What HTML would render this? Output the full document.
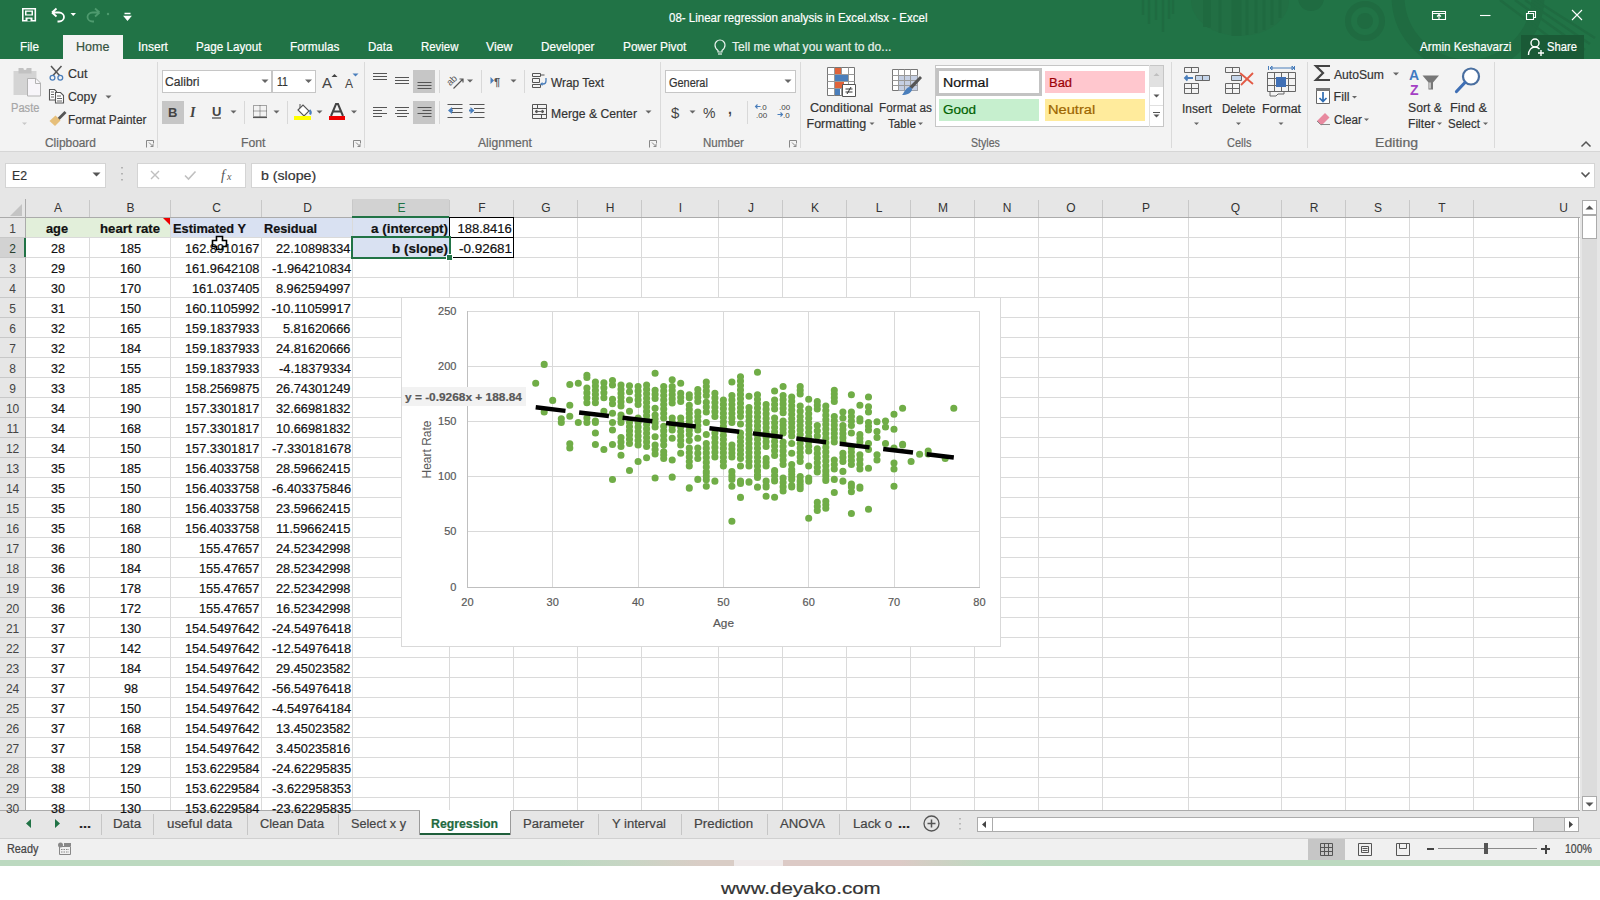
<!DOCTYPE html><html><head><meta charset="utf-8"><style>
html,body{margin:0;padding:0}body{width:1600px;height:900px;position:relative;overflow:hidden;background:#fff;font-family:'Liberation Sans',sans-serif}
.t{position:absolute;line-height:0;white-space:nowrap;-webkit-text-stroke:0.2px currentColor}
</style></head><body>
<div style="position:absolute;left:0px;top:0px;width:1600px;height:59px;background:#217346"></div>
<svg style="position:absolute;left:0;top:0" width="1600" height="59">
<g fill="none" stroke="#1f6b41" stroke-width="2.5">
<path d="M1143 0v15M1149 0v24M1156 0v20M1163 0v32M1169 0v19M1173 0v14"/>
<circle cx="1365" cy="21" r="17" stroke-width="6"/>
<circle cx="1468" cy="-4" r="70" stroke-width="13"/>
<path d="M1515 0l70 50M1525 0l65 44M1535 0l60 38M1500 0l60 45" stroke-width="2.5"/>
</g>
<path d="M1191 0a49 36 0 0 0 98 0z" fill="#226f44"/>
<g stroke="#1f6a40" stroke-width="3"><path d="M1209 0v28M1220 0v33M1233 0v36M1240 0v36M1247 0v35M1256 0v33M1264 0v30M1272 0v25M1280 0v18"/></g>
<path d="M1207 0v27" stroke="#1f6a40" stroke-width="8"/>
<path d="M1236 0v36" stroke="#1f6a40" stroke-width="8"/>
<circle cx="1365" cy="21" r="8" fill="#1f6b41"/>
<circle cx="1311" cy="-2" r="13" fill="#1f6b41"/>
</svg>
<div style="position:absolute;left:63px;top:35px;width:60px;height:24px;background:#f3f3f3"></div>
<div style="position:absolute;left:1521px;top:35px;width:63px;height:24px;background:#1a5a36"></div>
<div style="position:absolute;left:0px;top:59px;width:1600px;height:92px;background:#f3f3f3"></div>
<div style="position:absolute;left:0px;top:151px;width:1600px;height:1px;background:#d6d6d6"></div>
<div style="position:absolute;left:157px;top:62px;width:1px;height:86px;background:#dadada"></div>
<div style="position:absolute;left:364px;top:62px;width:1px;height:86px;background:#dadada"></div>
<div style="position:absolute;left:660px;top:62px;width:1px;height:86px;background:#dadada"></div>
<div style="position:absolute;left:800px;top:62px;width:1px;height:86px;background:#dadada"></div>
<div style="position:absolute;left:1171px;top:62px;width:1px;height:86px;background:#dadada"></div>
<div style="position:absolute;left:1307px;top:62px;width:1px;height:86px;background:#dadada"></div>
<div style="position:absolute;left:1494px;top:62px;width:1px;height:86px;background:#dadada"></div>
<div style="position:absolute;left:162px;top:70px;width:110px;height:23px;background:#fff;border:1px solid #c6c6c6;box-sizing:border-box"></div>
<div style="position:absolute;left:272px;top:70px;width:44px;height:23px;background:#fff;border:1px solid #c6c6c6;box-sizing:border-box"></div>
<div style="position:absolute;left:162px;top:101px;width:22px;height:23px;background:#c6c6c6"></div>
<div style="position:absolute;left:413px;top:70px;width:22px;height:23px;background:#c6c6c6"></div>
<div style="position:absolute;left:413px;top:101px;width:22px;height:23px;background:#c6c6c6"></div>
<div style="position:absolute;left:665px;top:70px;width:131px;height:23px;background:#fff;border:1px solid #c6c6c6;box-sizing:border-box"></div>
<div style="position:absolute;left:935px;top:65px;width:229px;height:62px;background:#fff;border:1px solid #c6c6c6;box-sizing:border-box"></div>
<div style="position:absolute;left:936px;top:68px;width:106px;height:28px;background:#fff;border:3px solid #c3c3c3;box-sizing:border-box"></div>
<div style="position:absolute;left:1045px;top:71px;width:100px;height:22px;background:#ffc7ce"></div>
<div style="position:absolute;left:939px;top:99px;width:100px;height:22px;background:#c6efce"></div>
<div style="position:absolute;left:1045px;top:99px;width:100px;height:22px;background:#ffeb9c"></div>
<div style="position:absolute;left:1150px;top:66px;width:13px;height:20px;background:#e1e1e1"></div>
<div style="position:absolute;left:1150px;top:86px;width:13px;height:1px;background:#e0e0e0"></div>
<div style="position:absolute;left:1150px;top:105px;width:13px;height:1px;background:#e0e0e0"></div>
<div style="position:absolute;left:1149px;top:65px;width:1px;height:62px;background:#e0e0e0"></div>
<div style="position:absolute;left:0px;top:152px;width:1600px;height:47px;background:#e6e6e6"></div>
<div style="position:absolute;left:5px;top:163px;width:101px;height:25px;background:#fff;border:1px solid #d4d4d4;box-sizing:border-box"></div>
<div style="position:absolute;left:137px;top:163px;width:109px;height:25px;background:#fff;border:1px solid #d4d4d4;box-sizing:border-box"></div>
<div style="position:absolute;left:251px;top:163px;width:1344px;height:25px;background:#fff;border:1px solid #d4d4d4;box-sizing:border-box"></div>
<div style="position:absolute;left:0px;top:199px;width:1600px;height:612px;background:#fff"></div>
<div style="position:absolute;left:0px;top:199px;width:1580px;height:19px;background:#e6e6e6"></div>
<div style="position:absolute;left:0px;top:218px;width:25px;height:593px;background:#e6e6e6"></div>
<div style="position:absolute;left:352px;top:199px;width:97px;height:18px;background:#d2d2d2"></div>
<div style="position:absolute;left:0px;top:237px;width:25px;height:20px;background:#d2d2d2"></div>
<div style="position:absolute;left:89px;top:218px;width:1px;height:593px;background:#dadada"></div>
<div style="position:absolute;left:89px;top:200px;width:1px;height:17px;background:#c8c8c8"></div>
<div style="position:absolute;left:170px;top:218px;width:1px;height:593px;background:#dadada"></div>
<div style="position:absolute;left:170px;top:200px;width:1px;height:17px;background:#c8c8c8"></div>
<div style="position:absolute;left:261px;top:218px;width:1px;height:593px;background:#dadada"></div>
<div style="position:absolute;left:261px;top:200px;width:1px;height:17px;background:#c8c8c8"></div>
<div style="position:absolute;left:352px;top:218px;width:1px;height:593px;background:#dadada"></div>
<div style="position:absolute;left:352px;top:200px;width:1px;height:17px;background:#c8c8c8"></div>
<div style="position:absolute;left:449px;top:218px;width:1px;height:593px;background:#dadada"></div>
<div style="position:absolute;left:449px;top:200px;width:1px;height:17px;background:#c8c8c8"></div>
<div style="position:absolute;left:513px;top:218px;width:1px;height:593px;background:#dadada"></div>
<div style="position:absolute;left:513px;top:200px;width:1px;height:17px;background:#c8c8c8"></div>
<div style="position:absolute;left:577px;top:218px;width:1px;height:593px;background:#dadada"></div>
<div style="position:absolute;left:577px;top:200px;width:1px;height:17px;background:#c8c8c8"></div>
<div style="position:absolute;left:641px;top:218px;width:1px;height:593px;background:#dadada"></div>
<div style="position:absolute;left:641px;top:200px;width:1px;height:17px;background:#c8c8c8"></div>
<div style="position:absolute;left:718px;top:218px;width:1px;height:593px;background:#dadada"></div>
<div style="position:absolute;left:718px;top:200px;width:1px;height:17px;background:#c8c8c8"></div>
<div style="position:absolute;left:782px;top:218px;width:1px;height:593px;background:#dadada"></div>
<div style="position:absolute;left:782px;top:200px;width:1px;height:17px;background:#c8c8c8"></div>
<div style="position:absolute;left:846px;top:218px;width:1px;height:593px;background:#dadada"></div>
<div style="position:absolute;left:846px;top:200px;width:1px;height:17px;background:#c8c8c8"></div>
<div style="position:absolute;left:910px;top:218px;width:1px;height:593px;background:#dadada"></div>
<div style="position:absolute;left:910px;top:200px;width:1px;height:17px;background:#c8c8c8"></div>
<div style="position:absolute;left:974px;top:218px;width:1px;height:593px;background:#dadada"></div>
<div style="position:absolute;left:974px;top:200px;width:1px;height:17px;background:#c8c8c8"></div>
<div style="position:absolute;left:1038px;top:218px;width:1px;height:593px;background:#dadada"></div>
<div style="position:absolute;left:1038px;top:200px;width:1px;height:17px;background:#c8c8c8"></div>
<div style="position:absolute;left:1102px;top:218px;width:1px;height:593px;background:#dadada"></div>
<div style="position:absolute;left:1102px;top:200px;width:1px;height:17px;background:#c8c8c8"></div>
<div style="position:absolute;left:1188px;top:218px;width:1px;height:593px;background:#dadada"></div>
<div style="position:absolute;left:1188px;top:200px;width:1px;height:17px;background:#c8c8c8"></div>
<div style="position:absolute;left:1281px;top:218px;width:1px;height:593px;background:#dadada"></div>
<div style="position:absolute;left:1281px;top:200px;width:1px;height:17px;background:#c8c8c8"></div>
<div style="position:absolute;left:1345px;top:218px;width:1px;height:593px;background:#dadada"></div>
<div style="position:absolute;left:1345px;top:200px;width:1px;height:17px;background:#c8c8c8"></div>
<div style="position:absolute;left:1409px;top:218px;width:1px;height:593px;background:#dadada"></div>
<div style="position:absolute;left:1409px;top:200px;width:1px;height:17px;background:#c8c8c8"></div>
<div style="position:absolute;left:1473px;top:218px;width:1px;height:593px;background:#dadada"></div>
<div style="position:absolute;left:1473px;top:200px;width:1px;height:17px;background:#c8c8c8"></div>
<div style="position:absolute;left:25px;top:237px;width:1555px;height:1px;background:#dadada"></div>
<div style="position:absolute;left:0px;top:237px;width:25px;height:1px;background:#c8c8c8"></div>
<div style="position:absolute;left:25px;top:257px;width:1555px;height:1px;background:#dadada"></div>
<div style="position:absolute;left:0px;top:257px;width:25px;height:1px;background:#c8c8c8"></div>
<div style="position:absolute;left:25px;top:277px;width:1555px;height:1px;background:#dadada"></div>
<div style="position:absolute;left:0px;top:277px;width:25px;height:1px;background:#c8c8c8"></div>
<div style="position:absolute;left:25px;top:297px;width:1555px;height:1px;background:#dadada"></div>
<div style="position:absolute;left:0px;top:297px;width:25px;height:1px;background:#c8c8c8"></div>
<div style="position:absolute;left:25px;top:317px;width:1555px;height:1px;background:#dadada"></div>
<div style="position:absolute;left:0px;top:317px;width:25px;height:1px;background:#c8c8c8"></div>
<div style="position:absolute;left:25px;top:337px;width:1555px;height:1px;background:#dadada"></div>
<div style="position:absolute;left:0px;top:337px;width:25px;height:1px;background:#c8c8c8"></div>
<div style="position:absolute;left:25px;top:357px;width:1555px;height:1px;background:#dadada"></div>
<div style="position:absolute;left:0px;top:357px;width:25px;height:1px;background:#c8c8c8"></div>
<div style="position:absolute;left:25px;top:377px;width:1555px;height:1px;background:#dadada"></div>
<div style="position:absolute;left:0px;top:377px;width:25px;height:1px;background:#c8c8c8"></div>
<div style="position:absolute;left:25px;top:397px;width:1555px;height:1px;background:#dadada"></div>
<div style="position:absolute;left:0px;top:397px;width:25px;height:1px;background:#c8c8c8"></div>
<div style="position:absolute;left:25px;top:417px;width:1555px;height:1px;background:#dadada"></div>
<div style="position:absolute;left:0px;top:417px;width:25px;height:1px;background:#c8c8c8"></div>
<div style="position:absolute;left:25px;top:437px;width:1555px;height:1px;background:#dadada"></div>
<div style="position:absolute;left:0px;top:437px;width:25px;height:1px;background:#c8c8c8"></div>
<div style="position:absolute;left:25px;top:457px;width:1555px;height:1px;background:#dadada"></div>
<div style="position:absolute;left:0px;top:457px;width:25px;height:1px;background:#c8c8c8"></div>
<div style="position:absolute;left:25px;top:477px;width:1555px;height:1px;background:#dadada"></div>
<div style="position:absolute;left:0px;top:477px;width:25px;height:1px;background:#c8c8c8"></div>
<div style="position:absolute;left:25px;top:497px;width:1555px;height:1px;background:#dadada"></div>
<div style="position:absolute;left:0px;top:497px;width:25px;height:1px;background:#c8c8c8"></div>
<div style="position:absolute;left:25px;top:517px;width:1555px;height:1px;background:#dadada"></div>
<div style="position:absolute;left:0px;top:517px;width:25px;height:1px;background:#c8c8c8"></div>
<div style="position:absolute;left:25px;top:537px;width:1555px;height:1px;background:#dadada"></div>
<div style="position:absolute;left:0px;top:537px;width:25px;height:1px;background:#c8c8c8"></div>
<div style="position:absolute;left:25px;top:557px;width:1555px;height:1px;background:#dadada"></div>
<div style="position:absolute;left:0px;top:557px;width:25px;height:1px;background:#c8c8c8"></div>
<div style="position:absolute;left:25px;top:577px;width:1555px;height:1px;background:#dadada"></div>
<div style="position:absolute;left:0px;top:577px;width:25px;height:1px;background:#c8c8c8"></div>
<div style="position:absolute;left:25px;top:597px;width:1555px;height:1px;background:#dadada"></div>
<div style="position:absolute;left:0px;top:597px;width:25px;height:1px;background:#c8c8c8"></div>
<div style="position:absolute;left:25px;top:617px;width:1555px;height:1px;background:#dadada"></div>
<div style="position:absolute;left:0px;top:617px;width:25px;height:1px;background:#c8c8c8"></div>
<div style="position:absolute;left:25px;top:637px;width:1555px;height:1px;background:#dadada"></div>
<div style="position:absolute;left:0px;top:637px;width:25px;height:1px;background:#c8c8c8"></div>
<div style="position:absolute;left:25px;top:657px;width:1555px;height:1px;background:#dadada"></div>
<div style="position:absolute;left:0px;top:657px;width:25px;height:1px;background:#c8c8c8"></div>
<div style="position:absolute;left:25px;top:677px;width:1555px;height:1px;background:#dadada"></div>
<div style="position:absolute;left:0px;top:677px;width:25px;height:1px;background:#c8c8c8"></div>
<div style="position:absolute;left:25px;top:697px;width:1555px;height:1px;background:#dadada"></div>
<div style="position:absolute;left:0px;top:697px;width:25px;height:1px;background:#c8c8c8"></div>
<div style="position:absolute;left:25px;top:717px;width:1555px;height:1px;background:#dadada"></div>
<div style="position:absolute;left:0px;top:717px;width:25px;height:1px;background:#c8c8c8"></div>
<div style="position:absolute;left:25px;top:737px;width:1555px;height:1px;background:#dadada"></div>
<div style="position:absolute;left:0px;top:737px;width:25px;height:1px;background:#c8c8c8"></div>
<div style="position:absolute;left:25px;top:757px;width:1555px;height:1px;background:#dadada"></div>
<div style="position:absolute;left:0px;top:757px;width:25px;height:1px;background:#c8c8c8"></div>
<div style="position:absolute;left:25px;top:777px;width:1555px;height:1px;background:#dadada"></div>
<div style="position:absolute;left:0px;top:777px;width:25px;height:1px;background:#c8c8c8"></div>
<div style="position:absolute;left:25px;top:797px;width:1555px;height:1px;background:#dadada"></div>
<div style="position:absolute;left:0px;top:797px;width:25px;height:1px;background:#c8c8c8"></div>
<div style="position:absolute;left:0px;top:217px;width:1580px;height:1px;background:#ababab"></div>
<div style="position:absolute;left:25px;top:199px;width:1px;height:612px;background:#ababab"></div>
<div style="position:absolute;left:1578px;top:217px;width:1px;height:594px;background:#ababab"></div>
<div style="position:absolute;left:24px;top:238px;width:2px;height:19px;background:#217346"></div>
<div style="position:absolute;left:26px;top:218px;width:144px;height:19px;background:#e2efda"></div>
<div style="position:absolute;left:171px;top:218px;width:181px;height:19px;background:#d9e1f2"></div>
<div style="position:absolute;left:353px;top:218px;width:96px;height:39px;background:#d9e1f2"></div>
<div style="position:absolute;left:449px;top:217px;width:65px;height:1px;background:#000"></div>
<div style="position:absolute;left:449px;top:237px;width:65px;height:1px;background:#000"></div>
<div style="position:absolute;left:449px;top:257px;width:65px;height:1px;background:#000"></div>
<div style="position:absolute;left:513px;top:217px;width:1px;height:41px;background:#000"></div>
<div style="position:absolute;left:449px;top:217px;width:1px;height:41px;background:#000"></div>
<div style="position:absolute;left:352px;top:216px;width:97px;height:2px;background:#217346"></div>
<div style="position:absolute;left:352px;top:236px;width:98px;height:2px;background:#217346"></div>
<div style="position:absolute;left:351px;top:236px;width:2px;height:23px;background:#217346"></div>
<div style="position:absolute;left:449px;top:236px;width:2px;height:19px;background:#217346"></div>
<div style="position:absolute;left:351px;top:257px;width:96px;height:2px;background:#217346"></div>
<div style="position:absolute;left:446px;top:254px;width:7px;height:7px;background:#217346;border:1px solid #fff;box-sizing:border-box"></div>
<svg style="position:absolute;left:163px;top:218px" width="7" height="7"><path d="M0 0H7V7Z" fill="#e00"/></svg>
<div style="position:absolute;left:401px;top:297px;width:600px;height:350px;background:#fff;border:1px solid #d9d9d9;box-sizing:border-box"></div>
<svg style="position:absolute;left:0;top:0" width="1600" height="900">
<path d="M467.4 531.9H979.5 M467.4 476.7H979.5 M467.4 421.5H979.5 M467.4 366.3H979.5 M467.4 311.1H979.5 M552.7 311.2V587 M638.1 311.2V587 M723.4 311.2V587 M808.7 311.2V587 M894.0 311.2V587 M979.4 311.2V587" stroke="#d9d9d9" stroke-width="1" fill="none" shape-rendering="crispEdges"/>
<path d="M467.5 311V587.5H979.5" stroke="#bfbfbf" stroke-width="1" fill="none" shape-rendering="crispEdges"/>
<path d="M535.7 383.2h0 M535.7 383.2h0 M544.2 364.4h0 M544.2 364.4h0 M544.2 412.0h0 M544.2 412.0h0 M552.7 400.4h0 M552.7 400.4h0 M561.3 418.7h0 M561.3 422.5h0 M569.8 384.5h0 M569.8 384.5h0 M569.8 405.2h0 M569.8 405.2h0 M569.8 416.2h0 M569.8 416.2h0 M569.8 443.8h0 M569.8 448.0h0 M578.3 383.2h0 M578.3 383.2h0 M578.3 422.5h0 M578.3 422.5h0 M586.9 375.2h0 M586.9 377.5h0 M586.9 388.0h0 M586.9 392.9h0 M586.9 397.8h0 M586.9 402.7h0 M586.9 418.0h0 M586.9 422.5h0 M595.4 382.0h0 M595.4 386.1h0 M595.4 390.3h0 M595.4 394.4h0 M595.4 398.6h0 M595.4 402.7h0 M595.4 421.0h0 M595.4 422.5h0 M595.4 433.0h0 M595.4 433.0h0 M595.4 444.5h0 M595.4 444.5h0 M603.9 382.7h0 M603.9 387.7h0 M603.9 392.7h0 M603.9 397.7h0 M603.9 411.2h0 M603.9 411.2h0 M603.9 449.5h0 M603.9 449.5h0 M612.5 380.5h0 M612.5 385.0h0 M612.5 399.2h0 M612.5 403.7h0 M612.5 413.2h0 M612.5 413.2h0 M612.5 422.5h0 M612.5 422.5h0 M612.5 430.0h0 M612.5 430.0h0 M612.5 444.5h0 M612.5 444.5h0 M612.5 479.5h0 M612.5 479.5h0 M621.0 385.0h0 M621.0 389.2h0 M621.0 393.4h0 M621.0 397.6h0 M621.0 401.8h0 M621.0 406.0h0 M621.0 415.0h0 M621.0 418.8h0 M621.0 422.5h0 M621.0 437.5h0 M621.0 442.0h0 M621.0 446.5h0 M621.0 455.2h0 M621.0 455.2h0 M629.5 385.7h0 M629.5 391.7h0 M629.5 400.0h0 M629.5 400.0h0 M629.5 411.2h0 M629.5 411.2h0 M629.5 422.5h0 M629.5 426.7h0 M629.5 430.9h0 M629.5 435.1h0 M629.5 439.3h0 M629.5 443.5h0 M629.5 470.5h0 M629.5 470.5h0 M638.1 386.5h0 M638.1 391.0h0 M638.1 395.5h0 M638.1 400.0h0 M638.1 404.5h0 M638.1 418.0h0 M638.1 422.5h0 M638.1 427.0h0 M638.1 431.5h0 M638.1 436.0h0 M638.1 440.5h0 M638.1 445.0h0 M638.1 461.5h0 M638.1 461.5h0 M646.6 385.0h0 M646.6 389.4h0 M646.6 393.8h0 M646.6 398.2h0 M646.6 402.6h0 M646.6 407.0h0 M646.6 411.4h0 M646.6 415.8h0 M646.6 420.1h0 M646.6 424.5h0 M646.6 428.9h0 M646.6 433.3h0 M646.6 437.7h0 M646.6 442.1h0 M646.6 446.5h0 M646.6 457.7h0 M646.6 457.7h0 M655.1 373.3h0 M655.1 373.3h0 M655.1 390.2h0 M655.1 394.4h0 M655.1 398.5h0 M655.1 408.2h0 M655.1 408.2h0 M655.1 415.0h0 M655.1 419.0h0 M655.1 423.0h0 M655.1 427.0h0 M655.1 436.7h0 M655.1 436.7h0 M655.1 445.0h0 M655.1 449.5h0 M655.1 454.0h0 M655.1 478.0h0 M655.1 478.0h0 M663.7 386.5h0 M663.7 391.0h0 M663.7 395.5h0 M663.7 400.0h0 M663.7 404.5h0 M663.7 409.0h0 M663.7 413.5h0 M663.7 418.0h0 M663.7 426.2h0 M663.7 430.9h0 M663.7 435.6h0 M663.7 440.3h0 M663.7 445.0h0 M663.7 451.7h0 M663.7 455.1h0 M663.7 458.5h0 M672.2 379.7h0 M672.2 379.7h0 M672.2 386.5h0 M672.2 390.6h0 M672.2 394.8h0 M672.2 398.9h0 M672.2 403.0h0 M672.2 418.0h0 M672.2 422.0h0 M672.2 426.0h0 M672.2 430.0h0 M672.2 438.2h0 M672.2 438.2h0 M672.2 460.0h0 M672.2 460.0h0 M672.2 477.2h0 M672.2 477.2h0 M680.7 383.2h0 M680.7 383.2h0 M680.7 393.2h0 M680.7 397.4h0 M680.7 401.5h0 M680.7 418.0h0 M680.7 422.5h0 M680.7 427.0h0 M680.7 431.5h0 M680.7 436.0h0 M680.7 440.5h0 M680.7 445.0h0 M680.7 453.2h0 M680.7 453.2h0 M689.3 394.7h0 M689.3 397.7h0 M689.3 405.2h0 M689.3 409.4h0 M689.3 413.6h0 M689.3 417.8h0 M689.3 421.9h0 M689.3 426.1h0 M689.3 430.3h0 M689.3 434.5h0 M689.3 440.5h0 M689.3 440.5h0 M689.3 448.0h0 M689.3 452.5h0 M689.3 457.0h0 M689.3 461.5h0 M689.3 466.0h0 M689.3 487.7h0 M689.3 487.7h0 M697.8 389.5h0 M697.8 393.5h0 M697.8 397.5h0 M697.8 401.5h0 M697.8 412.0h0 M697.8 416.5h0 M697.8 421.0h0 M697.8 425.5h0 M697.8 430.0h0 M697.8 438.2h0 M697.8 438.2h0 M697.8 448.0h0 M697.8 453.2h0 M697.8 458.5h0 M697.8 479.5h0 M697.8 479.5h0 M706.3 382.0h0 M706.3 386.5h0 M706.3 391.0h0 M706.3 395.5h0 M706.3 402.2h0 M706.3 407.1h0 M706.3 412.0h0 M706.3 422.5h0 M706.3 422.5h0 M706.3 434.5h0 M706.3 434.5h0 M706.3 443.5h0 M706.3 448.2h0 M706.3 452.9h0 M706.3 457.6h0 M706.3 462.4h0 M706.3 467.1h0 M706.3 471.8h0 M706.3 476.5h0 M706.3 486.2h0 M706.3 486.2h0 M714.9 393.2h0 M714.9 397.9h0 M714.9 402.5h0 M714.9 407.2h0 M714.9 411.8h0 M714.9 416.5h0 M714.9 433.0h0 M714.9 437.8h0 M714.9 442.6h0 M714.9 447.4h0 M714.9 452.2h0 M714.9 457.0h0 M714.9 481.0h0 M714.9 481.0h0 M723.4 400.0h0 M723.4 404.4h0 M723.4 408.8h0 M723.4 413.2h0 M723.4 417.6h0 M723.4 422.0h0 M723.4 426.4h0 M723.4 430.8h0 M723.4 435.2h0 M723.4 439.6h0 M723.4 444.0h0 M723.4 448.4h0 M723.4 452.8h0 M723.4 457.2h0 M723.4 461.6h0 M723.4 466.0h0 M731.9 382.0h0 M731.9 382.0h0 M731.9 395.5h0 M731.9 400.0h0 M731.9 404.5h0 M731.9 409.0h0 M731.9 413.5h0 M731.9 418.0h0 M731.9 422.5h0 M731.9 445.0h0 M731.9 449.0h0 M731.9 453.0h0 M731.9 457.0h0 M731.9 472.0h0 M731.9 475.8h0 M731.9 479.5h0 M740.5 376.7h0 M740.5 381.1h0 M740.5 385.5h0 M740.5 390.0h0 M740.5 394.4h0 M740.5 398.8h0 M740.5 403.2h0 M740.5 407.7h0 M740.5 412.1h0 M740.5 416.5h0 M740.5 424.0h0 M740.5 424.0h0 M740.5 433.0h0 M740.5 437.2h0 M740.5 441.5h0 M740.5 445.8h0 M740.5 450.0h0 M740.5 454.2h0 M740.5 458.5h0 M740.5 466.0h0 M740.5 466.0h0 M740.5 481.0h0 M740.5 482.5h0 M749.0 396.2h0 M749.0 396.2h0 M749.0 407.5h0 M749.0 412.0h0 M749.0 416.5h0 M749.0 421.0h0 M749.0 425.5h0 M749.0 430.0h0 M749.0 434.5h0 M749.0 439.0h0 M749.0 443.5h0 M749.0 448.0h0 M749.0 452.5h0 M749.0 457.0h0 M749.0 461.5h0 M749.0 466.0h0 M749.0 481.7h0 M749.0 481.7h0 M757.5 372.2h0 M757.5 372.2h0 M757.5 394.7h0 M757.5 399.2h0 M757.5 403.6h0 M757.5 408.1h0 M757.5 412.5h0 M757.5 417.0h0 M757.5 421.5h0 M757.5 425.9h0 M757.5 430.4h0 M757.5 434.9h0 M757.5 439.3h0 M757.5 443.8h0 M757.5 448.2h0 M757.5 452.7h0 M757.5 457.2h0 M757.5 461.6h0 M757.5 466.1h0 M757.5 470.5h0 M757.5 475.0h0 M757.5 487.0h0 M757.5 487.0h0 M766.1 404.5h0 M766.1 409.2h0 M766.1 413.8h0 M766.1 418.5h0 M766.1 423.2h0 M766.1 427.8h0 M766.1 432.5h0 M766.1 437.2h0 M766.1 441.8h0 M766.1 446.5h0 M766.1 458.5h0 M766.1 462.2h0 M766.1 466.0h0 M766.1 481.0h0 M766.1 487.0h0 M774.6 391.0h0 M774.6 391.0h0 M774.6 400.0h0 M774.6 404.5h0 M774.6 409.0h0 M774.6 418.0h0 M774.6 422.7h0 M774.6 427.4h0 M774.6 432.1h0 M774.6 436.8h0 M774.6 441.4h0 M774.6 446.1h0 M774.6 450.8h0 M774.6 455.5h0 M774.6 470.5h0 M774.6 475.8h0 M774.6 481.0h0 M783.1 386.5h0 M783.1 386.5h0 M783.1 395.5h0 M783.1 399.8h0 M783.1 404.1h0 M783.1 408.4h0 M783.1 412.7h0 M783.1 421.0h0 M783.1 425.0h0 M783.1 429.0h0 M783.1 433.0h0 M783.1 442.0h0 M783.1 446.5h0 M783.1 451.0h0 M783.1 455.5h0 M783.1 460.0h0 M783.1 464.5h0 M783.1 478.0h0 M783.1 482.5h0 M783.1 487.0h0 M791.7 397.0h0 M791.7 401.3h0 M791.7 405.7h0 M791.7 410.0h0 M791.7 414.3h0 M791.7 418.7h0 M791.7 423.0h0 M791.7 427.3h0 M791.7 431.7h0 M791.7 436.0h0 M791.7 443.5h0 M791.7 443.5h0 M791.7 453.2h0 M791.7 453.2h0 M791.7 464.5h0 M791.7 469.5h0 M791.7 474.5h0 M791.7 479.5h0 M791.7 485.5h0 M791.7 487.0h0 M800.2 386.5h0 M800.2 390.2h0 M800.2 394.0h0 M800.2 406.0h0 M800.2 411.2h0 M800.2 416.5h0 M800.2 421.0h0 M800.2 425.5h0 M800.2 430.0h0 M800.2 434.5h0 M800.2 439.0h0 M800.2 443.5h0 M800.2 448.0h0 M800.2 452.5h0 M800.2 457.0h0 M800.2 461.5h0 M800.2 476.5h0 M800.2 481.8h0 M800.2 487.0h0 M808.7 399.2h0 M808.7 399.2h0 M808.7 409.0h0 M808.7 413.7h0 M808.7 418.3h0 M808.7 423.0h0 M808.7 427.7h0 M808.7 432.3h0 M808.7 437.0h0 M808.7 441.7h0 M808.7 446.3h0 M808.7 451.0h0 M808.7 466.0h0 M808.7 466.0h0 M808.7 478.0h0 M808.7 481.0h0 M817.3 401.5h0 M817.3 405.2h0 M817.3 409.0h0 M817.3 425.5h0 M817.3 430.8h0 M817.3 436.0h0 M817.3 448.7h0 M817.3 453.4h0 M817.3 458.0h0 M817.3 462.7h0 M817.3 467.3h0 M817.3 472.0h0 M825.8 406.0h0 M825.8 410.6h0 M825.8 415.2h0 M825.8 419.8h0 M825.8 424.4h0 M825.8 429.0h0 M825.8 433.6h0 M825.8 438.2h0 M825.8 442.8h0 M825.8 447.3h0 M825.8 451.9h0 M825.8 456.5h0 M825.8 461.1h0 M825.8 465.7h0 M825.8 470.3h0 M825.8 474.9h0 M825.8 479.5h0 M834.3 390.2h0 M834.3 394.0h0 M834.3 397.7h0 M834.3 401.5h0 M834.3 416.5h0 M834.3 420.8h0 M834.3 425.0h0 M834.3 429.2h0 M834.3 433.5h0 M834.3 437.8h0 M834.3 442.0h0 M834.3 460.0h0 M834.3 464.5h0 M834.3 469.0h0 M834.3 479.5h0 M834.3 479.5h0 M842.9 412.0h0 M842.9 418.0h0 M842.9 425.5h0 M842.9 429.6h0 M842.9 433.8h0 M842.9 437.9h0 M842.9 442.0h0 M842.9 453.2h0 M842.9 457.4h0 M842.9 461.5h0 M842.9 471.2h0 M842.9 471.2h0 M842.9 481.0h0 M842.9 481.0h0 M851.4 394.7h0 M851.4 394.7h0 M851.4 412.0h0 M851.4 416.5h0 M851.4 421.0h0 M851.4 425.5h0 M851.4 433.0h0 M851.4 433.0h0 M851.4 448.0h0 M851.4 452.1h0 M851.4 456.2h0 M851.4 460.4h0 M851.4 464.5h0 M851.4 484.0h0 M851.4 487.0h0 M859.9 405.2h0 M859.9 405.2h0 M859.9 418.7h0 M859.9 421.0h0 M859.9 434.5h0 M859.9 438.2h0 M859.9 442.0h0 M859.9 454.7h0 M859.9 459.5h0 M859.9 464.2h0 M859.9 469.0h0 M859.9 487.0h0 M859.9 487.0h0 M868.5 397.0h0 M868.5 397.0h0 M868.5 406.7h0 M868.5 412.0h0 M868.5 422.5h0 M868.5 426.2h0 M868.5 430.0h0 M868.5 443.5h0 M868.5 449.5h0 M868.5 468.2h0 M868.5 468.2h0 M877.0 421.7h0 M877.0 421.7h0 M877.0 431.5h0 M877.0 437.5h0 M877.0 454.7h0 M877.0 460.0h0 M885.5 421.0h0 M885.5 427.0h0 M885.5 443.5h0 M885.5 443.5h0 M894.0 414.2h0 M894.0 414.2h0 M894.0 429.2h0 M894.0 429.2h0 M894.0 448.0h0 M894.0 448.0h0 M894.0 463.0h0 M894.0 469.0h0 M894.0 486.2h0 M894.0 486.2h0 M902.6 408.2h0 M902.6 408.2h0 M902.6 444.2h0 M902.6 445.0h0 M911.1 461.5h0 M911.1 461.5h0 M919.6 454.3h0 M919.6 454.3h0 M928.2 451.0h0 M928.2 454.0h0 M945.2 458.5h0 M945.2 458.5h0 M953.8 408.2h0 M953.8 408.2h0 M672.2 477.0h0 M672.2 477.0h0 M689.3 488.3h0 M689.3 488.3h0 M697.8 479.3h0 M697.8 479.3h0 M706.3 473.0h0 M706.3 479.7h0 M706.3 486.2h0 M706.3 486.2h0 M714.9 481.2h0 M714.9 481.2h0 M731.9 471.5h0 M731.9 477.5h0 M731.9 486.2h0 M731.9 486.2h0 M731.9 521.3h0 M731.9 521.3h0 M740.5 481.7h0 M740.5 483.5h0 M740.5 497.4h0 M740.5 497.4h0 M749.0 482.3h0 M749.0 482.3h0 M757.5 471.5h0 M757.5 477.5h0 M757.5 487.2h0 M757.5 487.2h0 M766.1 481.2h0 M766.1 485.7h0 M766.1 496.2h0 M766.1 496.2h0 M774.6 471.5h0 M774.6 475.6h0 M774.6 479.7h0 M774.6 497.3h0 M774.6 497.3h0 M783.1 478.2h0 M783.1 482.5h0 M783.1 486.7h0 M783.1 491.0h0 M791.7 471.5h0 M791.7 477.5h0 M791.7 486.2h0 M791.7 486.2h0 M800.2 477.0h0 M800.2 480.9h0 M800.2 484.8h0 M800.2 488.7h0 M808.7 479.0h0 M808.7 481.2h0 M808.7 518.3h0 M808.7 518.3h0 M817.3 471.5h0 M817.3 471.5h0 M817.3 502.2h0 M817.3 506.4h0 M817.3 510.5h0 M825.8 471.5h0 M825.8 476.0h0 M825.8 480.5h0 M825.8 501.2h0 M825.8 504.7h0 M825.8 508.2h0 M834.3 479.3h0 M834.3 479.3h0 M834.3 492.5h0 M834.3 492.5h0 M842.9 471.5h0 M842.9 471.5h0 M842.9 481.2h0 M842.9 481.2h0 M851.4 485.0h0 M851.4 491.7h0 M851.4 513.5h0 M851.4 513.5h0 M859.9 488.3h0 M859.9 488.3h0 M868.5 509.3h0 M868.5 509.3h0 M894.0 486.2h0 M894.0 486.2h0" stroke="#70ad47" stroke-width="7.1" stroke-linecap="round" fill="none"/>
<path d="M535.7 407.3L953.8 457.5" stroke="#000" stroke-width="4.5" stroke-dasharray="30 13.75" fill="none"/>
</svg>
<div style="position:absolute;left:402px;top:387px;width:124px;height:19px;background:#f2f2f2"></div>
<div style="position:absolute;left:431px;top:449.5px;width:0;height:0"><div style="position:absolute;left:0;top:0;transform:rotate(-90deg);transform-origin:0 0"><div style="position:absolute;left:-28.5px;top:-4.2px;line-height:0;font-family:'Liberation Sans';font-size:12px;color:#595959;white-space:nowrap">Heart Rate</div></div></div>
<svg style="position:absolute;left:0;top:0" width="1600" height="900"><path d="M216.5 236.5h6v4h4v6h-4v3h-6v-3h-4v-6h4z" fill="#fff" stroke="#000" stroke-width="1.6"/></svg>
<div style="position:absolute;left:0px;top:811px;width:1600px;height:27px;background:#e6e6e6"></div>
<div style="position:absolute;left:0px;top:810px;width:1580px;height:1px;background:#ababab"></div>
<div style="position:absolute;left:0px;top:838px;width:1600px;height:1px;background:#d0d0d0"></div>
<svg style="position:absolute;left:0;top:811px" width="1600" height="27"><path d="M26 12.5l5-4.5v9z M55 8v9l5-4.5z" fill="#217346"/></svg>
<div style="position:absolute;left:101px;top:814px;width:1px;height:21px;background:#c6c6c6"></div>
<div style="position:absolute;left:153px;top:814px;width:1px;height:21px;background:#c6c6c6"></div>
<div style="position:absolute;left:246.5px;top:814px;width:1px;height:21px;background:#c6c6c6"></div>
<div style="position:absolute;left:337.5px;top:814px;width:1px;height:21px;background:#c6c6c6"></div>
<div style="position:absolute;left:597.5px;top:814px;width:1px;height:21px;background:#c6c6c6"></div>
<div style="position:absolute;left:680.5px;top:814px;width:1px;height:21px;background:#c6c6c6"></div>
<div style="position:absolute;left:767px;top:814px;width:1px;height:21px;background:#c6c6c6"></div>
<div style="position:absolute;left:838.5px;top:814px;width:1px;height:21px;background:#c6c6c6"></div>
<div style="position:absolute;left:420px;top:810px;width:91px;height:24px;background:#fff"></div>
<div style="position:absolute;left:420px;top:833px;width:90px;height:2px;background:#1f5f3b"></div>
<div style="position:absolute;left:419px;top:811px;width:1px;height:24px;background:#9a9a9a"></div>
<div style="position:absolute;left:510px;top:811px;width:1px;height:24px;background:#9a9a9a"></div>
<svg style="position:absolute;left:0;top:811px" width="1600" height="27"><circle cx="931.5" cy="12.5" r="7.5" fill="none" stroke="#555" stroke-width="1.3"/><path d="M927.5 12.5h8M931.5 8.5v8" stroke="#555" stroke-width="1.5"/><path d="M960 7v1.5M960 12v1.5M960 17v1.5" stroke="#aaa" stroke-width="1.5"/></svg>
<div style="position:absolute;left:977px;top:817px;width:602px;height:15px;background:#dcdcdc;border:1px solid #ababab;box-sizing:border-box"></div>
<div style="position:absolute;left:992px;top:817px;width:542px;height:15px;background:#fff;border:1px solid #ababab;box-sizing:border-box"></div>
<div style="position:absolute;left:977px;top:817px;width:16px;height:15px;background:#fff;border:1px solid #ababab;box-sizing:border-box"></div>
<div style="position:absolute;left:1564px;top:817px;width:15px;height:15px;background:#fff;border:1px solid #ababab;box-sizing:border-box"></div>
<svg style="position:absolute;left:0;top:811px" width="1600" height="27"><path d="M982 13.5l4-3.5v7z M1569 10v7l4-3.5z" fill="#444"/></svg>
<div style="position:absolute;left:1580px;top:199px;width:20px;height:612px;background:#e6e6e6"></div>
<div style="position:absolute;left:1582px;top:217px;width:15px;height:594px;background:#dcdcdc"></div>
<div style="position:absolute;left:1582px;top:200px;width:15px;height:15px;background:#fff;border:1px solid #ababab;box-sizing:border-box"></div>
<div style="position:absolute;left:1582px;top:215px;width:15px;height:24px;background:#fff;border:1px solid #ababab;box-sizing:border-box"></div>
<div style="position:absolute;left:1582px;top:796px;width:15px;height:15px;background:#fff;border:1px solid #ababab;box-sizing:border-box"></div>
<svg style="position:absolute;left:1580px;top:199px" width="20" height="612"><path d="M5.5 10.5l4-4 4 4z M5.5 603.5l4 4 4-4z" fill="#555"/></svg>
<div style="position:absolute;left:0px;top:839px;width:1600px;height:21px;background:#f0f0f0"></div>
<div style="position:absolute;left:1308px;top:839px;width:37px;height:21px;background:#c6c6c6"></div>
<div style="position:absolute;left:1438px;top:848px;width:99px;height:1px;background:#8a8a8a"></div>
<div style="position:absolute;left:1484px;top:843px;width:4px;height:11px;background:#555"></div>
<div style="position:absolute;left:1427px;top:848px;width:7px;height:2px;background:#444"></div>
<div style="position:absolute;left:1541px;top:848px;width:9px;height:2px;background:#444"></div>
<div style="position:absolute;left:1544.5px;top:844.5px;width:2px;height:9px;background:#444"></div>
<div style="position:absolute;left:0;top:860px;width:1600px;height:6px;background:linear-gradient(90deg,#bcd9c0 0,#bcd9c0 560px,#c6d6c4 620px,#d9cdc6 700px,#d9cdc6 734px,#eeeaea 734px,#eeeaea 783px,#dccac6 783px,#dccac6 900px,#bcd9c0 990px,#bcd9c0 1600px)"></div>
<div style="position:absolute;left:0px;top:866px;width:1600px;height:34px;background:#fff"></div>
<svg style="position:absolute;left:0;top:0" width="1600" height="900"><g fill="none" stroke="#fff" stroke-width="1.6"><path d="M22.8 8.8h12.5v12h-12.5z"/></g><path d="M25 10.5h8v5h-8z" fill="#fff"/><path d="M26.5 11.8h5v2.6h-5z" fill="#217346"/><path d="M25.5 17.5h7v3.5h-7z" fill="#fff"/><path d="M27.5 18.8h3v2.4h-3z" fill="#217346"/><path d="M52 12.5l4.5-4M52 12.5l4.5 4M52.5 12.5h6.5a5 4.5 0 0 1 0 9h-1.5" stroke="#fff" stroke-width="1.8" fill="none"/><path d="M70.5 13h5.5l-2.75 3z" fill="#fff"/><path d="M99.5 12.5l-4.5-4M99.5 12.5l-4.5 4M99 12.5h-6.5a5 4.5 0 0 0 0 9h1.5" stroke="#4e9a6e" stroke-width="1.8" fill="none"/><circle cx="108" cy="14" r="1.2" fill="#4e9a6e"/><path d="M124.5 13.5h6M124.5 16.5h6l-3 3.5z" stroke="#fff" stroke-width="1.3" fill="#fff"/><g fill="none" stroke="#fff" stroke-width="1.1"><path d="M1432.5 11.5h13v8h-13zM1432.5 13.5h13M1439 19v-4.5M1437 16.5l2-2 2 2"/><path d="M1480 15.5h10.5"/><path d="M1526.5 13.5h7v6h-7zM1528.5 13.5v-2h7v6h-2"/><path d="M1572 10l10 10M1582 10l-10 10"/></g><g fill="none" stroke="#fff" stroke-width="1.4"><circle cx="1535" cy="43" r="4"/><path d="M1528.5 55c0-5 3-8 6.5-8 1.8 0 3.5 0.8 4.5 2"/><path d="M1541 50v6M1538 53h6"/></g><g fill="none" stroke="#e8f1ec" stroke-width="1.2"><path d="M718 50.5c-2-1.5-3-3.5-3-5.5a5 5 0 0 1 10 0c0 2-1 4-3 5.5v1.5h-4z"/><path d="M718 54h4"/></g><path d="M13.5 71h23v24h-23z" fill="#d4d4d4"/><path d="M18.5 68h13v5.5h-13z" fill="#c2c2c2"/><circle cx="25" cy="68.5" r="1.5" fill="#f3f3f3"/><path d="M27.5 78.5h8.5l4.5 4.5v13h-13z" fill="#f7f5f9" stroke="#b3b3b3" stroke-width="1"/><path d="M35.5 78.5v5h5" fill="none" stroke="#b3b3b3"/><path d="M22.0 122.5h5l-2.5 2.5z" fill="#c8c8c8"/><path d="M51 66l8.5 9.5M61.5 66l-8.5 9.5" stroke="#555" stroke-width="1.5"/><g fill="none" stroke="#4a7ebb" stroke-width="1.3"><circle cx="52.5" cy="77.8" r="2.4"/><circle cx="60.3" cy="77.8" r="2.4"/></g><g fill="#fff" stroke="#555" stroke-width="1.1"><path d="M49.5 89.5h5l2 2v8.5h-7z"/><path d="M55.5 92.5h5l3 3v7.5h-8z"/></g><path d="M51 92h3M51 94.5h3M51 97h3M57 96h4M57 98.5h5M57 101h5" stroke="#555" stroke-width="0.9"/><path d="M105.5 95.5h6l-3.0 3.0z" fill="#666"/><path d="M57 118.5l7.5-7.5 2 2-7.5 7.5z" fill="#555"/><path d="M49.5 121l6-5.5 5 5-5.5 5.5z" fill="#e6bf7a"/><path d="M146.5 147.5v-7h7v3M149 142.5l4 4M150.5 146.5h2.5v-2.5" stroke="#888" stroke-width="1" fill="none"/><path d="M353.5 147.5v-7h7v3M356 142.5l4 4M357.5 146.5h2.5v-2.5" stroke="#888" stroke-width="1" fill="none"/><path d="M649.5 147.5v-7h7v3M652 142.5l4 4M653.5 146.5h2.5v-2.5" stroke="#888" stroke-width="1" fill="none"/><path d="M789.5 147.5v-7h7v3M792 142.5l4 4M793.5 146.5h2.5v-2.5" stroke="#888" stroke-width="1" fill="none"/><path d="M261.5 79.5h7l-3.5 3.5z" fill="#666"/><path d="M305.0 79.5h7l-3.5 3.5z" fill="#666"/><text x="322" y="88" font-family="Liberation Sans" font-size="15" fill="#444">A</text><path d="M331.5 77l3-3 3 3z" fill="#444"/><text x="345" y="88" font-family="Liberation Sans" font-size="12" fill="#444">A</text><path d="M352.5 73.5h6l-3 3z" fill="#4a7ebb"/><text x="168" y="117" font-family="Liberation Sans" font-size="13" font-weight="bold" fill="#444">B</text><text x="190" y="117" font-family="Liberation Serif" font-size="14" font-style="italic" font-weight="bold" fill="#444">I</text><text x="212" y="116" font-family="Liberation Sans" font-size="13" font-weight="bold" fill="#444">U</text><path d="M212 118h9" stroke="#444" stroke-width="1.2"/><path d="M230.5 110.5h6l-3.0 3.0z" fill="#666"/><path d="M244.5 101v23M287.5 101v23" stroke="#d8d8d8"/><path d="M253.5 105.5h13v11h-13zM260 105.5v11M253.5 111h13" stroke="#555" stroke-width="1" stroke-dasharray="1 1" fill="none"/><path d="M253 117.5h14" stroke="#555" stroke-width="1.2"/><path d="M273.5 110.5h6l-3.0 3.0z" fill="#666"/><path d="M298 110l5-5 6 6-5 5z" fill="#fff" stroke="#555" stroke-width="1.1"/><path d="M300 104v4" stroke="#555" stroke-width="1"/><path d="M309.5 110c1.5 1.5 1.5 3 0.5 4.5" stroke="#4a7ebb" stroke-width="2.2" fill="none"/><path d="M294 116h17v4h-17z" fill="#ffff00"/><path d="M316.5 110.5h6l-3.0 3.0z" fill="#666"/><path d="M331 116l5-12h2l5 12M333 111.5h8" stroke="#444" stroke-width="2" fill="none"/><path d="M329 116h16v4h-16z" fill="#e00"/><path d="M351.0 110.5h6l-3.0 3.0z" fill="#666"/><g stroke="#555" stroke-width="1.2"><path d="M373 73.5h14M373 76.5h14M373 79.5h14"/><path d="M395 77.5h14M395 80.5h14M395 83.5h14"/><path d="M417.5 82.5h14M417.5 85.5h14M417.5 88.5h14"/><path d="M373 107.5h14M373 110.5h9M373 113.5h14M373 116.5h9"/><path d="M395 107.5h14M397 110.5h10M395 113.5h14M397 116.5h10"/><path d="M417.5 107.5h14M422.5 110.5h9M417.5 113.5h14M422.5 116.5h9"/><path d="M447.5 104.5h15M452 108.5h10.5M452 112.5h10.5M447.5 117.5h15"/><path d="M469.5 104.5h15M474 108.5h10.5M474 112.5h10.5M469.5 117.5h15"/></g><path d="M439.5 70v23M439.5 101v23M481.5 70v23M524.5 70v23" stroke="#d8d8d8"/><path d="M448 110.5l4-3.5v7z" fill="#4a7ebb"/><path d="M451 110.5h2" stroke="#4a7ebb" stroke-width="2"/><path d="M474.5 110.5l-4-3.5v7z" fill="#4a7ebb"/><path d="M469 110.5h2" stroke="#4a7ebb" stroke-width="2"/><text x="446" y="84" font-family="Liberation Sans" font-size="9.5" fill="#555" transform="rotate(-45 451 80)">ab</text><path d="M453.5 88.5l9-9M459.5 79h3.5v3.5" stroke="#555" stroke-width="1.2" fill="none"/><path d="M467.0 79.5h6l-3.0 3.0z" fill="#666"/><path d="M490.5 77v7l3.5-3.5z" fill="#4a7ebb"/><text x="494" y="86" font-family="Liberation Sans" font-size="11" font-weight="bold" fill="#555">&#182;</text><path d="M510.5 79.5h6l-3.0 3.0z" fill="#666"/><g fill="none" stroke="#555" stroke-width="1"><path d="M532.5 73.5h8v3h-8zM532.5 78.5h7v4h-7zM532.5 84.5h8v3h-8zM540.5 75h4"/><path d="M546 78v3c0 2-1 3-3 3h-2" stroke="#4a7ebb" stroke-width="1.3"/></g><path d="M540 84l2.5-2v4z" fill="#4a7ebb"/><g fill="none" stroke="#555" stroke-width="1"><path d="M532.5 104.5h14v14h-14zM532.5 108.5h14M532.5 114.5h14M537.5 104.5v4M541.5 114.5v4"/></g><path d="M535 111.5h9M535 111.5l2-1.5v3zM544 111.5l-2-1.5v3z" stroke="#555" stroke-width="0.9" fill="#555"/><path d="M645.5 110.5h6l-3.0 3.0z" fill="#666"/><path d="M784.5 79.5h7l-3.5 3.5z" fill="#666"/><text x="671" y="118" font-family="Liberation Sans" font-size="15" fill="#444">$</text><path d="M689.5 110.5h6l-3.0 3.0z" fill="#666"/><text x="703" y="118" font-family="Liberation Sans" font-size="14" fill="#444">%</text><text x="728" y="114" font-family="Liberation Sans" font-size="14" font-weight="bold" fill="#444">,</text><path d="M747.5 101v23" stroke="#d8d8d8"/><text x="760" y="110" font-family="Liberation Sans" font-size="8" fill="#444">.0</text><text x="756" y="117.5" font-family="Liberation Sans" font-size="8" fill="#444">.00</text><path d="M755.5 106.5h5M757.5 104.5l-2 2 2 2" stroke="#4a7ebb" stroke-width="1.1" fill="none"/><text x="779" y="110" font-family="Liberation Sans" font-size="8" fill="#444">.00</text><text x="783" y="117.5" font-family="Liberation Sans" font-size="8" fill="#444">.0</text><path d="M777.5 114.5h5M780.5 112.5l2 2-2 2" stroke="#4a7ebb" stroke-width="1.1" fill="none"/><g><path d="M827.5 67.5h27v28h-27z" fill="#fff" stroke="#777"/><path d="M827.5 74.5h27M827.5 81.5h27M827.5 88.5h27M834.5 67.5v28M841.5 67.5v28M848.5 67.5v28" stroke="#999" stroke-width="1" fill="none"/><path d="M835 68h6v6h-6z" fill="#e0633a"/><path d="M835 75h13v6h-13z" fill="#4a7ebb"/><path d="M835 82h9v6h-9z" fill="#e0633a"/><path d="M835 89h5v6h-5z" fill="#4a7ebb"/><path d="M842.5 84.5h13v12h-13z" fill="#fff" stroke="#555"/><path d="M845.5 89h7M845.5 92h7M847 94l4-7" stroke="#333" stroke-width="1"/></g><path d="M869.5 122.5h5l-2.5 2.5z" fill="#666"/><g><path d="M892.5 69.5h25v21h-25z" fill="#fff" stroke="#777"/><path d="M898.5 75h19v15.5h-19z" fill="#c5cfe3"/><path d="M892.5 75.5h25M892.5 80.5h25M892.5 85.5h25M898.5 69.5v21M904.5 69.5v21M910.5 69.5v21" stroke="#999" fill="none"/><path d="M920 76l2 2-10 11-3-2z" fill="#555"/><path d="M909 87c2 0 3 1 3 3-1 3-5 5-10 5 2-2 3-6 7-8z" fill="#4a7ebb"/></g><path d="M918.0 122.5h5l-2.5 2.5z" fill="#666"/><path d="M1153.5 76l3-3 3 3z" fill="#c0c0c0"/><path d="M1153.5 94.5h6l-3.0 3.0z" fill="#555"/><path d="M1153 112.5h7" stroke="#555"/><path d="M1153.5 114.5h6l-3.0 3.0z" fill="#555"/><g fill="none" stroke="#666" stroke-width="1"><path d="M1184.5 67.5h14v5h-14zM1191.5 67.5v5"/><path d="M1184.5 83.5h14v10h-14zM1184.5 88.5h14M1191.5 83.5v10"/></g><path d="M1195.5 75.5h14v5h-14zM1202.5 75.5v5" fill="#c5d5ea" stroke="#666"/><path d="M1185 78h8M1187.5 75.5l-2.5 2.5 2.5 2.5" stroke="#4a7ebb" stroke-width="1.8" fill="none"/><path d="M1194.0 122.5h5l-2.5 2.5z" fill="#666"/><g fill="none" stroke="#666" stroke-width="1"><path d="M1225.5 67.5h14v5h-14zM1232.5 67.5v5"/><path d="M1225.5 83.5h14v10h-14zM1225.5 88.5h14M1232.5 83.5v10"/></g><path d="M1231.5 75.5h10v5h-10z" fill="#c5d5ea" stroke="#666"/><path d="M1240 73l13 11M1253 73l-12 12" stroke="#e35a45" stroke-width="1.8"/><path d="M1236.0 122.5h5l-2.5 2.5z" fill="#666"/><g fill="none" stroke="#666" stroke-width="1"><path d="M1267.5 72.5h28v19h-28zM1267.5 78.5h28M1267.5 85.5h28M1274.5 72.5v19M1281.5 72.5v19M1288.5 72.5v19"/><path d="M1270 92v4h6l2-2h6v-2"/></g><path d="M1276 77h10v10h-10z" fill="#3f6fb5"/><path d="M1268.5 66v4M1294.5 66v4M1270 68h24M1270 68l2-2v4zM1294 68l-2-2v4z" stroke="#4a7ebb" stroke-width="1" fill="none"/><path d="M1278.5 122.5h5l-2.5 2.5z" fill="#666"/><path d="M1330 66h-14l7 7-7 7h14" stroke="#444" stroke-width="2.2" fill="none"/><path d="M1393.0 72.5h6l-3.0 3.0z" fill="#666"/><path d="M1316.5 88.5h13v15h-13z" fill="#fff" stroke="#666"/><path d="M1316 88h14v3h-14z" fill="#777"/><path d="M1323 92v9M1319.5 98l3.5 3.5 3.5-3.5" stroke="#2f6db3" stroke-width="1.7" fill="none"/><path d="M1352.0 96h5l-2.5 2.5z" fill="#666"/><path d="M1317 121l8-8 4.5 4.5-8 8z" fill="#e8899f"/><path d="M1317 121l3.5 3.5h9.5" stroke="#888" stroke-width="1" fill="none"/><path d="M1364.0 118.5h5l-2.5 2.5z" fill="#666"/><text x="1409" y="80" font-family="Liberation Sans" font-size="14" font-weight="bold" fill="#3f7ac2">A</text><text x="1410" y="94.5" font-family="Liberation Sans" font-size="14" font-weight="bold" fill="#a43fc4">Z</text><path d="M1422.5 75.5h16.5l-6 7v7h-4.5v-7z" fill="#777"/><path d="M1430 82.5v6" stroke="#f3f3f3" stroke-width="1.2"/><path d="M1437.0 122.5h5l-2.5 2.5z" fill="#666"/><circle cx="1471" cy="76.5" r="8" fill="#fff" stroke="#4a6fa0" stroke-width="2.2"/><path d="M1465 82.5l-8.5 9" stroke="#3f6fb5" stroke-width="3.2" stroke-linecap="round"/><path d="M1483.0 122.5h5l-2.5 2.5z" fill="#666"/><path d="M1581.5 146.5l4.5-4.5 4.5 4.5" stroke="#555" stroke-width="1.5" fill="none"/><path d="M92.5 172.5h8l-4.0 4.0z" fill="#555"/><path d="M122 167v1.5M122 173v1.5M122 179v1.5" stroke="#999" stroke-width="1.3"/><path d="M151 171l8 8M159 171l-8 8" stroke="#c0c0c0" stroke-width="1.4"/><path d="M185 175.5l3.5 3.5 7-7.5" stroke="#c0c0c0" stroke-width="1.6" fill="none"/><text x="221" y="180" font-family="Liberation Serif" font-size="14" font-style="italic" fill="#555">f</text><text x="227" y="180" font-family="Liberation Serif" font-size="10" font-style="italic" fill="#555">x</text><path d="M1581.5 172.5l4 4 4-4" stroke="#555" stroke-width="1.6" fill="none"/><path d="M10 216h12v-12z" fill="#c4c4c4"/><circle cx="60.5" cy="845" r="2.5" fill="#888"/><path d="M59.5 846.5h11v8h-11z" fill="none" stroke="#888"/><path d="M64 843h7v3h-7z" fill="#888"/><path d="M61 849.5h8M61 852h8" stroke="#888" stroke-dasharray="1.5 1"/><g fill="none" stroke="#555" stroke-width="1"><path d="M1320.5 843.5h12v12h-12zM1324.5 843.5v12M1328.5 843.5v12M1320.5 847.5h12M1320.5 851.5h12"/><path d="M1358.5 843.5h13v12h-13zM1361.5 846.5h7v6h-7zM1362.5 848.5h5M1362.5 850.5h5"/><path d="M1396.5 843.5h13v12h-13zM1399.5 843.5v5h7v-5"/></g></svg>
<div class="t" style="left:669.0px;top:17.7px;font-size:12.5px;color:#fff;transform:scaleX(0.921);transform-origin:0 0;">08- Linear regression analysis in Excel.xlsx - Excel</div>
<div class="t" style="left:19.5px;top:47.2px;font-size:12.5px;color:#fff;transform:scaleX(0.940);transform-origin:0 0;">File</div>
<div class="t" style="left:137.5px;top:47.2px;font-size:12.5px;color:#fff;transform:scaleX(0.958);transform-origin:0 0;">Insert</div>
<div class="t" style="left:196.0px;top:47.2px;font-size:12.5px;color:#fff;transform:scaleX(0.932);transform-origin:0 0;">Page Layout</div>
<div class="t" style="left:290.0px;top:47.2px;font-size:12.5px;color:#fff;transform:scaleX(0.949);transform-origin:0 0;">Formulas</div>
<div class="t" style="left:368.0px;top:47.2px;font-size:12.5px;color:#fff;transform:scaleX(0.925);transform-origin:0 0;">Data</div>
<div class="t" style="left:421.0px;top:47.2px;font-size:12.5px;color:#fff;transform:scaleX(0.912);transform-origin:0 0;">Review</div>
<div class="t" style="left:486.0px;top:47.2px;font-size:12.5px;color:#fff;transform:scaleX(0.986);transform-origin:0 0;">View</div>
<div class="t" style="left:541.0px;top:47.2px;font-size:12.5px;color:#fff;transform:scaleX(0.938);transform-origin:0 0;">Developer</div>
<div class="t" style="left:623.0px;top:47.2px;font-size:12.5px;color:#fff;transform:scaleX(0.951);transform-origin:0 0;">Power Pivot</div>
<div class="t" style="left:732.0px;top:47.2px;font-size:12.5px;color:#e8f1ec;transform:scaleX(0.968);transform-origin:0 0;">Tell me what you want to do...</div>
<div class="t" style="left:1419.5px;top:47.2px;font-size:12.5px;color:#fff;transform:scaleX(0.933);transform-origin:0 0;">Armin Keshavarzi</div>
<div class="t" style="left:76.0px;top:47.2px;font-size:12.5px;color:#35523f;">Home</div>
<div class="t" style="left:1546.6px;top:47.2px;font-size:12.5px;color:#fff;transform:scaleX(0.896);transform-origin:0 0;">Share</div>
<div class="t" style="left:45.0px;top:143.1px;font-size:12px;color:#666;transform:scaleX(0.992);transform-origin:0 0;">Clipboard</div>
<div class="t" style="left:241.0px;top:143.1px;font-size:12px;color:#666;transform:scaleX(1.019);transform-origin:0 0;">Font</div>
<div class="t" style="left:477.5px;top:143.1px;font-size:12px;color:#666;transform:scaleX(1.011);transform-origin:0 0;">Alignment</div>
<div class="t" style="left:702.5px;top:143.1px;font-size:12px;color:#666;transform:scaleX(0.959);transform-origin:0 0;">Number</div>
<div class="t" style="left:970.6px;top:143.1px;font-size:12px;color:#666;transform:scaleX(0.883);transform-origin:0 0;">Styles</div>
<div class="t" style="left:1227.1px;top:143.1px;font-size:12px;color:#666;transform:scaleX(0.914);transform-origin:0 0;">Cells</div>
<div class="t" style="left:1375.4px;top:143.1px;font-size:12px;color:#666;transform:scaleX(1.175);transform-origin:0 0;">Editing</div>
<div class="t" style="left:11.1px;top:108.0px;font-size:12.5px;color:#a6a6a6;transform:scaleX(0.888);transform-origin:0 0;">Paste</div>
<div class="t" style="left:68.0px;top:74.0px;font-size:12.5px;color:#333;">Cut</div>
<div class="t" style="left:68.0px;top:96.5px;font-size:12.5px;color:#333;transform:scaleX(0.976);transform-origin:0 0;">Copy</div>
<div class="t" style="left:68.0px;top:119.5px;font-size:12.5px;color:#333;transform:scaleX(0.949);transform-origin:0 0;">Format Painter</div>
<div class="t" style="left:165.0px;top:82.0px;font-size:12.5px;color:#333;transform:scaleX(0.973);transform-origin:0 0;">Calibri</div>
<div class="t" style="left:276.6px;top:82.0px;font-size:12.5px;color:#333;transform:scaleX(0.834);transform-origin:0 0;">11</div>
<div class="t" style="left:550.5px;top:82.5px;font-size:12.5px;color:#333;transform:scaleX(0.949);transform-origin:0 0;">Wrap Text</div>
<div class="t" style="left:550.5px;top:113.5px;font-size:12.5px;color:#333;transform:scaleX(0.974);transform-origin:0 0;">Merge &amp; Center</div>
<div class="t" style="left:668.6px;top:82.5px;font-size:12.5px;color:#333;transform:scaleX(0.874);transform-origin:0 0;">General</div>
<div class="t" style="left:809.5px;top:108.0px;font-size:12.5px;color:#333;transform:scaleX(1.007);transform-origin:0 0;">Conditional</div>
<div class="t" style="left:806.5px;top:123.5px;font-size:12.5px;color:#333;">Formatting</div>
<div class="t" style="left:878.5px;top:108.0px;font-size:12.5px;color:#333;transform:scaleX(0.941);transform-origin:0 0;">Format as</div>
<div class="t" style="left:887.5px;top:123.5px;font-size:12.5px;color:#333;transform:scaleX(0.935);transform-origin:0 0;">Table</div>
<div class="t" style="left:942.9px;top:82.5px;font-size:12.5px;color:#111;transform:scaleX(1.132);transform-origin:0 0;">Normal</div>
<div class="t" style="left:1048.5px;top:82.5px;font-size:12.5px;color:#9c0006;transform:scaleX(1.035);transform-origin:0 0;">Bad</div>
<div class="t" style="left:942.5px;top:110.0px;font-size:12.5px;color:#006100;transform:scaleX(1.081);transform-origin:0 0;">Good</div>
<div class="t" style="left:1048.4px;top:110.0px;font-size:12.5px;color:#9c6500;transform:scaleX(1.171);transform-origin:0 0;">Neutral</div>
<div class="t" style="left:1181.5px;top:108.5px;font-size:12.5px;color:#333;transform:scaleX(0.958);transform-origin:0 0;">Insert</div>
<div class="t" style="left:1222.0px;top:108.5px;font-size:12.5px;color:#333;transform:scaleX(0.925);transform-origin:0 0;">Delete</div>
<div class="t" style="left:1261.5px;top:108.5px;font-size:12.5px;color:#333;transform:scaleX(0.985);transform-origin:0 0;">Format</div>
<div class="t" style="left:1333.5px;top:74.5px;font-size:12.5px;color:#333;transform:scaleX(0.972);transform-origin:0 0;">AutoSum</div>
<div class="t" style="left:1333.5px;top:96.5px;font-size:12.5px;color:#333;">Fill</div>
<div class="t" style="left:1333.5px;top:119.5px;font-size:12.5px;color:#333;transform:scaleX(0.935);transform-origin:0 0;">Clear</div>
<div class="t" style="left:1407.5px;top:108.0px;font-size:12.5px;color:#333;transform:scaleX(0.978);transform-origin:0 0;">Sort &amp;</div>
<div class="t" style="left:1407.5px;top:123.5px;font-size:12.5px;color:#333;transform:scaleX(0.971);transform-origin:0 0;">Filter</div>
<div class="t" style="left:1449.5px;top:108.0px;font-size:12.5px;color:#333;transform:scaleX(1.024);transform-origin:0 0;">Find &amp;</div>
<div class="t" style="left:1447.5px;top:123.5px;font-size:12.5px;color:#333;transform:scaleX(0.919);transform-origin:0 0;">Select</div>
<div class="t" style="left:11.5px;top:175.5px;font-size:13px;color:#333;transform:scaleX(0.942);transform-origin:0 0;">E2</div>
<div class="t" style="left:261.4px;top:175.5px;font-size:13px;color:#333;transform:scaleX(1.090);transform-origin:0 0;">b (slope)</div>
<div class="t" style="left:54.0px;top:207.8px;font-size:12px;color:#333;-webkit-text-stroke:0">A</div>
<div class="t" style="left:126.5px;top:207.8px;font-size:12px;color:#333;-webkit-text-stroke:0">B</div>
<div class="t" style="left:212.2px;top:207.8px;font-size:12px;color:#333;-webkit-text-stroke:0">C</div>
<div class="t" style="left:303.2px;top:207.8px;font-size:12px;color:#333;-webkit-text-stroke:0">D</div>
<div class="t" style="left:397.5px;top:207.8px;font-size:12px;color:#217346;-webkit-text-stroke:0">E</div>
<div class="t" style="left:478.3px;top:207.8px;font-size:12px;color:#333;-webkit-text-stroke:0">F</div>
<div class="t" style="left:541.3px;top:207.8px;font-size:12px;color:#333;-webkit-text-stroke:0">G</div>
<div class="t" style="left:605.7px;top:207.8px;font-size:12px;color:#333;-webkit-text-stroke:0">H</div>
<div class="t" style="left:678.8px;top:207.8px;font-size:12px;color:#333;-webkit-text-stroke:0">I</div>
<div class="t" style="left:748.0px;top:207.8px;font-size:12px;color:#333;-webkit-text-stroke:0">J</div>
<div class="t" style="left:811.0px;top:207.8px;font-size:12px;color:#333;-webkit-text-stroke:0">K</div>
<div class="t" style="left:875.7px;top:207.8px;font-size:12px;color:#333;-webkit-text-stroke:0">L</div>
<div class="t" style="left:938.0px;top:207.8px;font-size:12px;color:#333;-webkit-text-stroke:0">M</div>
<div class="t" style="left:1002.7px;top:207.8px;font-size:12px;color:#333;-webkit-text-stroke:0">N</div>
<div class="t" style="left:1066.3px;top:207.8px;font-size:12px;color:#333;-webkit-text-stroke:0">O</div>
<div class="t" style="left:1142.0px;top:207.8px;font-size:12px;color:#333;-webkit-text-stroke:0">P</div>
<div class="t" style="left:1230.8px;top:207.8px;font-size:12px;color:#333;-webkit-text-stroke:0">Q</div>
<div class="t" style="left:1309.7px;top:207.8px;font-size:12px;color:#333;-webkit-text-stroke:0">R</div>
<div class="t" style="left:1374.0px;top:207.8px;font-size:12px;color:#333;-webkit-text-stroke:0">S</div>
<div class="t" style="left:1438.3px;top:207.8px;font-size:12px;color:#333;-webkit-text-stroke:0">T</div>
<div class="t" style="left:1559.2px;top:207.8px;font-size:12px;color:#333;-webkit-text-stroke:0">U</div>
<div class="t" style="left:9.3px;top:229.0px;font-size:12px;color:#444;-webkit-text-stroke:0">1</div>
<div class="t" style="left:9.3px;top:249.0px;font-size:12px;color:#28402f;-webkit-text-stroke:0">2</div>
<div class="t" style="left:9.3px;top:269.0px;font-size:12px;color:#444;-webkit-text-stroke:0">3</div>
<div class="t" style="left:9.3px;top:289.0px;font-size:12px;color:#444;-webkit-text-stroke:0">4</div>
<div class="t" style="left:9.3px;top:309.0px;font-size:12px;color:#444;-webkit-text-stroke:0">5</div>
<div class="t" style="left:9.3px;top:329.0px;font-size:12px;color:#444;-webkit-text-stroke:0">6</div>
<div class="t" style="left:9.3px;top:349.0px;font-size:12px;color:#444;-webkit-text-stroke:0">7</div>
<div class="t" style="left:9.3px;top:369.0px;font-size:12px;color:#444;-webkit-text-stroke:0">8</div>
<div class="t" style="left:9.3px;top:389.0px;font-size:12px;color:#444;-webkit-text-stroke:0">9</div>
<div class="t" style="left:5.9px;top:409.0px;font-size:12px;color:#444;-webkit-text-stroke:0">10</div>
<div class="t" style="left:6.4px;top:429.0px;font-size:12px;color:#444;-webkit-text-stroke:0">11</div>
<div class="t" style="left:5.9px;top:449.0px;font-size:12px;color:#444;-webkit-text-stroke:0">12</div>
<div class="t" style="left:5.9px;top:469.0px;font-size:12px;color:#444;-webkit-text-stroke:0">13</div>
<div class="t" style="left:5.9px;top:489.0px;font-size:12px;color:#444;-webkit-text-stroke:0">14</div>
<div class="t" style="left:5.9px;top:509.0px;font-size:12px;color:#444;-webkit-text-stroke:0">15</div>
<div class="t" style="left:5.9px;top:529.0px;font-size:12px;color:#444;-webkit-text-stroke:0">16</div>
<div class="t" style="left:5.9px;top:549.0px;font-size:12px;color:#444;-webkit-text-stroke:0">17</div>
<div class="t" style="left:5.9px;top:569.0px;font-size:12px;color:#444;-webkit-text-stroke:0">18</div>
<div class="t" style="left:5.9px;top:589.0px;font-size:12px;color:#444;-webkit-text-stroke:0">19</div>
<div class="t" style="left:5.9px;top:609.0px;font-size:12px;color:#444;-webkit-text-stroke:0">20</div>
<div class="t" style="left:5.9px;top:629.0px;font-size:12px;color:#444;-webkit-text-stroke:0">21</div>
<div class="t" style="left:5.9px;top:649.0px;font-size:12px;color:#444;-webkit-text-stroke:0">22</div>
<div class="t" style="left:5.9px;top:669.0px;font-size:12px;color:#444;-webkit-text-stroke:0">23</div>
<div class="t" style="left:5.9px;top:689.0px;font-size:12px;color:#444;-webkit-text-stroke:0">24</div>
<div class="t" style="left:5.9px;top:709.0px;font-size:12px;color:#444;-webkit-text-stroke:0">25</div>
<div class="t" style="left:5.9px;top:729.0px;font-size:12px;color:#444;-webkit-text-stroke:0">26</div>
<div class="t" style="left:5.9px;top:749.0px;font-size:12px;color:#444;-webkit-text-stroke:0">27</div>
<div class="t" style="left:5.9px;top:769.0px;font-size:12px;color:#444;-webkit-text-stroke:0">28</div>
<div class="t" style="left:5.9px;top:789.0px;font-size:12px;color:#444;-webkit-text-stroke:0">29</div>
<div class="t" style="left:5.9px;top:809.0px;font-size:12px;color:#444;-webkit-text-stroke:0">30</div>
<div class="t" style="left:46.0px;top:228.5px;font-size:13px;color:#111;font-weight:700;transform:scaleX(0.983);transform-origin:0 0;">age</div>
<div class="t" style="left:99.5px;top:228.5px;font-size:13px;color:#111;font-weight:700;transform:scaleX(1.014);transform-origin:0 0;">heart rate</div>
<div class="t" style="left:172.5px;top:228.5px;font-size:13px;color:#111;font-weight:700;transform:scaleX(0.984);transform-origin:0 0;">Estimated Y</div>
<div class="t" style="left:263.5px;top:228.5px;font-size:13px;color:#111;font-weight:700;transform:scaleX(0.978);transform-origin:0 0;">Residual</div>
<div class="t" style="left:370.5px;top:228.5px;font-size:13px;color:#111;font-weight:700;transform:scaleX(1.036);transform-origin:0 0;">a (intercept)</div>
<div class="t" style="left:391.5px;top:248.5px;font-size:13px;color:#111;font-weight:700;transform:scaleX(1.035);transform-origin:0 0;">b (slope)</div>
<div class="t" style="left:457.5px;top:228.5px;font-size:13px;color:#111;">188.8416</div>
<div class="t" style="left:458.5px;top:248.5px;font-size:13px;color:#111;transform:scaleX(1.034);transform-origin:0 0;">-0.92681</div>
<div class="t" style="left:51.2px;top:248.5px;font-size:13px;color:#111;transform:scaleX(0.968);transform-origin:0 0;">28</div>
<div class="t" style="left:120.0px;top:248.5px;font-size:13px;color:#111;transform:scaleX(0.973);transform-origin:0 0;">185</div>
<div class="t" style="left:185.1px;top:248.5px;font-size:13px;color:#111;transform:scaleX(0.980);transform-origin:0 0;">162.8910167</div>
<div class="t" style="left:276.1px;top:248.5px;font-size:13px;color:#111;transform:scaleX(0.980);transform-origin:0 0;">22.10898334</div>
<div class="t" style="left:51.2px;top:268.5px;font-size:13px;color:#111;transform:scaleX(0.968);transform-origin:0 0;">29</div>
<div class="t" style="left:120.0px;top:268.5px;font-size:13px;color:#111;transform:scaleX(0.973);transform-origin:0 0;">160</div>
<div class="t" style="left:185.1px;top:268.5px;font-size:13px;color:#111;transform:scaleX(0.980);transform-origin:0 0;">161.9642108</div>
<div class="t" style="left:271.5px;top:268.5px;font-size:13px;color:#111;transform:scaleX(0.985);transform-origin:0 0;">-1.964210834</div>
<div class="t" style="left:51.2px;top:288.5px;font-size:13px;color:#111;transform:scaleX(0.968);transform-origin:0 0;">30</div>
<div class="t" style="left:120.0px;top:288.5px;font-size:13px;color:#111;transform:scaleX(0.973);transform-origin:0 0;">170</div>
<div class="t" style="left:192.2px;top:288.5px;font-size:13px;color:#111;transform:scaleX(0.980);transform-origin:0 0;">161.037405</div>
<div class="t" style="left:276.1px;top:288.5px;font-size:13px;color:#111;transform:scaleX(0.980);transform-origin:0 0;">8.962594997</div>
<div class="t" style="left:51.2px;top:308.5px;font-size:13px;color:#111;transform:scaleX(0.968);transform-origin:0 0;">31</div>
<div class="t" style="left:120.0px;top:308.5px;font-size:13px;color:#111;transform:scaleX(0.973);transform-origin:0 0;">150</div>
<div class="t" style="left:185.1px;top:308.5px;font-size:13px;color:#111;transform:scaleX(0.993);transform-origin:0 0;">160.1105992</div>
<div class="t" style="left:271.5px;top:308.5px;font-size:13px;color:#111;">-10.11059917</div>
<div class="t" style="left:51.2px;top:328.5px;font-size:13px;color:#111;transform:scaleX(0.968);transform-origin:0 0;">32</div>
<div class="t" style="left:120.0px;top:328.5px;font-size:13px;color:#111;transform:scaleX(0.973);transform-origin:0 0;">165</div>
<div class="t" style="left:185.1px;top:328.5px;font-size:13px;color:#111;transform:scaleX(0.980);transform-origin:0 0;">159.1837933</div>
<div class="t" style="left:283.2px;top:328.5px;font-size:13px;color:#111;transform:scaleX(0.980);transform-origin:0 0;">5.81620666</div>
<div class="t" style="left:51.2px;top:348.5px;font-size:13px;color:#111;transform:scaleX(0.968);transform-origin:0 0;">32</div>
<div class="t" style="left:120.0px;top:348.5px;font-size:13px;color:#111;transform:scaleX(0.973);transform-origin:0 0;">184</div>
<div class="t" style="left:185.1px;top:348.5px;font-size:13px;color:#111;transform:scaleX(0.980);transform-origin:0 0;">159.1837933</div>
<div class="t" style="left:276.1px;top:348.5px;font-size:13px;color:#111;transform:scaleX(0.980);transform-origin:0 0;">24.81620666</div>
<div class="t" style="left:51.2px;top:368.5px;font-size:13px;color:#111;transform:scaleX(0.968);transform-origin:0 0;">32</div>
<div class="t" style="left:120.0px;top:368.5px;font-size:13px;color:#111;transform:scaleX(0.973);transform-origin:0 0;">155</div>
<div class="t" style="left:185.1px;top:368.5px;font-size:13px;color:#111;transform:scaleX(0.980);transform-origin:0 0;">159.1837933</div>
<div class="t" style="left:278.6px;top:368.5px;font-size:13px;color:#111;transform:scaleX(0.985);transform-origin:0 0;">-4.18379334</div>
<div class="t" style="left:51.2px;top:388.5px;font-size:13px;color:#111;transform:scaleX(0.968);transform-origin:0 0;">33</div>
<div class="t" style="left:120.0px;top:388.5px;font-size:13px;color:#111;transform:scaleX(0.973);transform-origin:0 0;">185</div>
<div class="t" style="left:185.1px;top:388.5px;font-size:13px;color:#111;transform:scaleX(0.980);transform-origin:0 0;">158.2569875</div>
<div class="t" style="left:276.1px;top:388.5px;font-size:13px;color:#111;transform:scaleX(0.980);transform-origin:0 0;">26.74301249</div>
<div class="t" style="left:51.2px;top:408.5px;font-size:13px;color:#111;transform:scaleX(0.968);transform-origin:0 0;">34</div>
<div class="t" style="left:120.0px;top:408.5px;font-size:13px;color:#111;transform:scaleX(0.973);transform-origin:0 0;">190</div>
<div class="t" style="left:185.1px;top:408.5px;font-size:13px;color:#111;transform:scaleX(0.980);transform-origin:0 0;">157.3301817</div>
<div class="t" style="left:276.1px;top:408.5px;font-size:13px;color:#111;transform:scaleX(0.980);transform-origin:0 0;">32.66981832</div>
<div class="t" style="left:51.2px;top:428.5px;font-size:13px;color:#111;transform:scaleX(0.968);transform-origin:0 0;">34</div>
<div class="t" style="left:120.0px;top:428.5px;font-size:13px;color:#111;transform:scaleX(0.973);transform-origin:0 0;">168</div>
<div class="t" style="left:185.1px;top:428.5px;font-size:13px;color:#111;transform:scaleX(0.980);transform-origin:0 0;">157.3301817</div>
<div class="t" style="left:276.1px;top:428.5px;font-size:13px;color:#111;transform:scaleX(0.980);transform-origin:0 0;">10.66981832</div>
<div class="t" style="left:51.2px;top:448.5px;font-size:13px;color:#111;transform:scaleX(0.968);transform-origin:0 0;">34</div>
<div class="t" style="left:120.0px;top:448.5px;font-size:13px;color:#111;transform:scaleX(0.973);transform-origin:0 0;">150</div>
<div class="t" style="left:185.1px;top:448.5px;font-size:13px;color:#111;transform:scaleX(0.980);transform-origin:0 0;">157.3301817</div>
<div class="t" style="left:271.5px;top:448.5px;font-size:13px;color:#111;transform:scaleX(0.985);transform-origin:0 0;">-7.330181678</div>
<div class="t" style="left:51.2px;top:468.5px;font-size:13px;color:#111;transform:scaleX(0.968);transform-origin:0 0;">35</div>
<div class="t" style="left:120.0px;top:468.5px;font-size:13px;color:#111;transform:scaleX(0.973);transform-origin:0 0;">185</div>
<div class="t" style="left:185.1px;top:468.5px;font-size:13px;color:#111;transform:scaleX(0.980);transform-origin:0 0;">156.4033758</div>
<div class="t" style="left:276.1px;top:468.5px;font-size:13px;color:#111;transform:scaleX(0.980);transform-origin:0 0;">28.59662415</div>
<div class="t" style="left:51.2px;top:488.5px;font-size:13px;color:#111;transform:scaleX(0.968);transform-origin:0 0;">35</div>
<div class="t" style="left:120.0px;top:488.5px;font-size:13px;color:#111;transform:scaleX(0.973);transform-origin:0 0;">150</div>
<div class="t" style="left:185.1px;top:488.5px;font-size:13px;color:#111;transform:scaleX(0.980);transform-origin:0 0;">156.4033758</div>
<div class="t" style="left:271.5px;top:488.5px;font-size:13px;color:#111;transform:scaleX(0.985);transform-origin:0 0;">-6.403375846</div>
<div class="t" style="left:51.2px;top:508.5px;font-size:13px;color:#111;transform:scaleX(0.968);transform-origin:0 0;">35</div>
<div class="t" style="left:120.0px;top:508.5px;font-size:13px;color:#111;transform:scaleX(0.973);transform-origin:0 0;">180</div>
<div class="t" style="left:185.1px;top:508.5px;font-size:13px;color:#111;transform:scaleX(0.980);transform-origin:0 0;">156.4033758</div>
<div class="t" style="left:276.1px;top:508.5px;font-size:13px;color:#111;transform:scaleX(0.980);transform-origin:0 0;">23.59662415</div>
<div class="t" style="left:51.2px;top:528.5px;font-size:13px;color:#111;transform:scaleX(0.968);transform-origin:0 0;">35</div>
<div class="t" style="left:120.0px;top:528.5px;font-size:13px;color:#111;transform:scaleX(0.973);transform-origin:0 0;">168</div>
<div class="t" style="left:185.1px;top:528.5px;font-size:13px;color:#111;transform:scaleX(0.980);transform-origin:0 0;">156.4033758</div>
<div class="t" style="left:276.1px;top:528.5px;font-size:13px;color:#111;transform:scaleX(0.993);transform-origin:0 0;">11.59662415</div>
<div class="t" style="left:51.2px;top:548.5px;font-size:13px;color:#111;transform:scaleX(0.968);transform-origin:0 0;">36</div>
<div class="t" style="left:120.0px;top:548.5px;font-size:13px;color:#111;transform:scaleX(0.973);transform-origin:0 0;">180</div>
<div class="t" style="left:199.3px;top:548.5px;font-size:13px;color:#111;transform:scaleX(0.980);transform-origin:0 0;">155.47657</div>
<div class="t" style="left:276.1px;top:548.5px;font-size:13px;color:#111;transform:scaleX(0.980);transform-origin:0 0;">24.52342998</div>
<div class="t" style="left:51.2px;top:568.5px;font-size:13px;color:#111;transform:scaleX(0.968);transform-origin:0 0;">36</div>
<div class="t" style="left:120.0px;top:568.5px;font-size:13px;color:#111;transform:scaleX(0.973);transform-origin:0 0;">184</div>
<div class="t" style="left:199.3px;top:568.5px;font-size:13px;color:#111;transform:scaleX(0.980);transform-origin:0 0;">155.47657</div>
<div class="t" style="left:276.1px;top:568.5px;font-size:13px;color:#111;transform:scaleX(0.980);transform-origin:0 0;">28.52342998</div>
<div class="t" style="left:51.2px;top:588.5px;font-size:13px;color:#111;transform:scaleX(0.968);transform-origin:0 0;">36</div>
<div class="t" style="left:120.0px;top:588.5px;font-size:13px;color:#111;transform:scaleX(0.973);transform-origin:0 0;">178</div>
<div class="t" style="left:199.3px;top:588.5px;font-size:13px;color:#111;transform:scaleX(0.980);transform-origin:0 0;">155.47657</div>
<div class="t" style="left:276.1px;top:588.5px;font-size:13px;color:#111;transform:scaleX(0.980);transform-origin:0 0;">22.52342998</div>
<div class="t" style="left:51.2px;top:608.5px;font-size:13px;color:#111;transform:scaleX(0.968);transform-origin:0 0;">36</div>
<div class="t" style="left:120.0px;top:608.5px;font-size:13px;color:#111;transform:scaleX(0.973);transform-origin:0 0;">172</div>
<div class="t" style="left:199.3px;top:608.5px;font-size:13px;color:#111;transform:scaleX(0.980);transform-origin:0 0;">155.47657</div>
<div class="t" style="left:276.1px;top:608.5px;font-size:13px;color:#111;transform:scaleX(0.980);transform-origin:0 0;">16.52342998</div>
<div class="t" style="left:51.2px;top:628.5px;font-size:13px;color:#111;transform:scaleX(0.968);transform-origin:0 0;">37</div>
<div class="t" style="left:120.0px;top:628.5px;font-size:13px;color:#111;transform:scaleX(0.973);transform-origin:0 0;">130</div>
<div class="t" style="left:185.1px;top:628.5px;font-size:13px;color:#111;transform:scaleX(0.980);transform-origin:0 0;">154.5497642</div>
<div class="t" style="left:271.5px;top:628.5px;font-size:13px;color:#111;transform:scaleX(0.985);transform-origin:0 0;">-24.54976418</div>
<div class="t" style="left:51.2px;top:648.5px;font-size:13px;color:#111;transform:scaleX(0.968);transform-origin:0 0;">37</div>
<div class="t" style="left:120.0px;top:648.5px;font-size:13px;color:#111;transform:scaleX(0.973);transform-origin:0 0;">142</div>
<div class="t" style="left:185.1px;top:648.5px;font-size:13px;color:#111;transform:scaleX(0.980);transform-origin:0 0;">154.5497642</div>
<div class="t" style="left:271.5px;top:648.5px;font-size:13px;color:#111;transform:scaleX(0.985);transform-origin:0 0;">-12.54976418</div>
<div class="t" style="left:51.2px;top:668.5px;font-size:13px;color:#111;transform:scaleX(0.968);transform-origin:0 0;">37</div>
<div class="t" style="left:120.0px;top:668.5px;font-size:13px;color:#111;transform:scaleX(0.973);transform-origin:0 0;">184</div>
<div class="t" style="left:185.1px;top:668.5px;font-size:13px;color:#111;transform:scaleX(0.980);transform-origin:0 0;">154.5497642</div>
<div class="t" style="left:276.1px;top:668.5px;font-size:13px;color:#111;transform:scaleX(0.980);transform-origin:0 0;">29.45023582</div>
<div class="t" style="left:51.2px;top:688.5px;font-size:13px;color:#111;transform:scaleX(0.968);transform-origin:0 0;">37</div>
<div class="t" style="left:123.6px;top:688.5px;font-size:13px;color:#111;transform:scaleX(0.968);transform-origin:0 0;">98</div>
<div class="t" style="left:185.1px;top:688.5px;font-size:13px;color:#111;transform:scaleX(0.980);transform-origin:0 0;">154.5497642</div>
<div class="t" style="left:271.5px;top:688.5px;font-size:13px;color:#111;transform:scaleX(0.985);transform-origin:0 0;">-56.54976418</div>
<div class="t" style="left:51.2px;top:708.5px;font-size:13px;color:#111;transform:scaleX(0.968);transform-origin:0 0;">37</div>
<div class="t" style="left:120.0px;top:708.5px;font-size:13px;color:#111;transform:scaleX(0.973);transform-origin:0 0;">150</div>
<div class="t" style="left:185.1px;top:708.5px;font-size:13px;color:#111;transform:scaleX(0.980);transform-origin:0 0;">154.5497642</div>
<div class="t" style="left:271.5px;top:708.5px;font-size:13px;color:#111;transform:scaleX(0.985);transform-origin:0 0;">-4.549764184</div>
<div class="t" style="left:51.2px;top:728.5px;font-size:13px;color:#111;transform:scaleX(0.968);transform-origin:0 0;">37</div>
<div class="t" style="left:120.0px;top:728.5px;font-size:13px;color:#111;transform:scaleX(0.973);transform-origin:0 0;">168</div>
<div class="t" style="left:185.1px;top:728.5px;font-size:13px;color:#111;transform:scaleX(0.980);transform-origin:0 0;">154.5497642</div>
<div class="t" style="left:276.1px;top:728.5px;font-size:13px;color:#111;transform:scaleX(0.980);transform-origin:0 0;">13.45023582</div>
<div class="t" style="left:51.2px;top:748.5px;font-size:13px;color:#111;transform:scaleX(0.968);transform-origin:0 0;">37</div>
<div class="t" style="left:120.0px;top:748.5px;font-size:13px;color:#111;transform:scaleX(0.973);transform-origin:0 0;">158</div>
<div class="t" style="left:185.1px;top:748.5px;font-size:13px;color:#111;transform:scaleX(0.980);transform-origin:0 0;">154.5497642</div>
<div class="t" style="left:276.1px;top:748.5px;font-size:13px;color:#111;transform:scaleX(0.980);transform-origin:0 0;">3.450235816</div>
<div class="t" style="left:51.2px;top:768.5px;font-size:13px;color:#111;transform:scaleX(0.968);transform-origin:0 0;">38</div>
<div class="t" style="left:120.0px;top:768.5px;font-size:13px;color:#111;transform:scaleX(0.973);transform-origin:0 0;">129</div>
<div class="t" style="left:185.1px;top:768.5px;font-size:13px;color:#111;transform:scaleX(0.980);transform-origin:0 0;">153.6229584</div>
<div class="t" style="left:271.5px;top:768.5px;font-size:13px;color:#111;transform:scaleX(0.985);transform-origin:0 0;">-24.62295835</div>
<div class="t" style="left:51.2px;top:788.5px;font-size:13px;color:#111;transform:scaleX(0.968);transform-origin:0 0;">38</div>
<div class="t" style="left:120.0px;top:788.5px;font-size:13px;color:#111;transform:scaleX(0.973);transform-origin:0 0;">150</div>
<div class="t" style="left:185.1px;top:788.5px;font-size:13px;color:#111;transform:scaleX(0.980);transform-origin:0 0;">153.6229584</div>
<div class="t" style="left:271.5px;top:788.5px;font-size:13px;color:#111;transform:scaleX(0.985);transform-origin:0 0;">-3.622958353</div>
<div class="t" style="left:51.2px;top:808.5px;font-size:13px;color:#111;transform:scaleX(0.968);transform-origin:0 0;">38</div>
<div class="t" style="left:120.0px;top:808.5px;font-size:13px;color:#111;transform:scaleX(0.973);transform-origin:0 0;">130</div>
<div class="t" style="left:185.1px;top:808.5px;font-size:13px;color:#111;transform:scaleX(0.980);transform-origin:0 0;">153.6229584</div>
<div class="t" style="left:271.5px;top:808.5px;font-size:13px;color:#111;transform:scaleX(0.985);transform-origin:0 0;">-23.62295835</div>
<div class="t" style="left:450.3px;top:586.5px;font-size:11px;color:#595959;">0</div>
<div class="t" style="left:444.2px;top:531.3px;font-size:11px;color:#595959;">50</div>
<div class="t" style="left:438.1px;top:476.1px;font-size:11px;color:#595959;">100</div>
<div class="t" style="left:438.1px;top:420.9px;font-size:11px;color:#595959;">150</div>
<div class="t" style="left:438.1px;top:365.7px;font-size:11px;color:#595959;">200</div>
<div class="t" style="left:438.1px;top:310.5px;font-size:11px;color:#595959;">250</div>
<div class="t" style="left:461.3px;top:602.2px;font-size:11px;color:#595959;">20</div>
<div class="t" style="left:546.6px;top:602.2px;font-size:11px;color:#595959;">30</div>
<div class="t" style="left:631.9px;top:602.2px;font-size:11px;color:#595959;">40</div>
<div class="t" style="left:717.3px;top:602.2px;font-size:11px;color:#595959;">50</div>
<div class="t" style="left:802.6px;top:602.2px;font-size:11px;color:#595959;">60</div>
<div class="t" style="left:887.9px;top:602.2px;font-size:11px;color:#595959;">70</div>
<div class="t" style="left:973.3px;top:602.2px;font-size:11px;color:#595959;">80</div>
<div class="t" style="left:712.5px;top:623.0px;font-size:11.5px;color:#595959;transform:scaleX(1.023);transform-origin:0 0;">Age</div>
<div class="t" style="left:404.5px;top:397.0px;font-size:11.5px;color:#595959;font-weight:700;transform:scaleX(1.033);transform-origin:0 0;">y = -0.9268x + 188.84</div>
<div class="t" style="left:79.4px;top:823.5px;font-size:13px;color:#222;font-weight:700;transform:scaleX(1.122);transform-origin:0 0;">...</div>
<div class="t" style="left:112.5px;top:823.7px;font-size:12.5px;color:#444;transform:scaleX(1.063);transform-origin:0 0;">Data</div>
<div class="t" style="left:166.5px;top:823.7px;font-size:12.5px;color:#444;transform:scaleX(1.064);transform-origin:0 0;">useful data</div>
<div class="t" style="left:259.5px;top:823.7px;font-size:12.5px;color:#444;transform:scaleX(1.024);transform-origin:0 0;">Clean Data</div>
<div class="t" style="left:350.5px;top:823.7px;font-size:12.5px;color:#444;transform:scaleX(1.015);transform-origin:0 0;">Select x y</div>
<div class="t" style="left:522.5px;top:823.7px;font-size:12.5px;color:#444;transform:scaleX(1.046);transform-origin:0 0;">Parameter</div>
<div class="t" style="left:611.5px;top:823.7px;font-size:12.5px;color:#444;transform:scaleX(1.041);transform-origin:0 0;">Y interval</div>
<div class="t" style="left:693.5px;top:823.7px;font-size:12.5px;color:#444;transform:scaleX(1.062);transform-origin:0 0;">Prediction</div>
<div class="t" style="left:779.5px;top:823.7px;font-size:12.5px;color:#444;transform:scaleX(1.052);transform-origin:0 0;">ANOVA</div>
<div class="t" style="left:852.5px;top:823.7px;font-size:12.5px;color:#444;transform:scaleX(1.060);transform-origin:0 0;">Lack o</div>
<div class="t" style="left:431.0px;top:823.7px;font-size:12.5px;color:#1f6a3f;font-weight:700;transform:scaleX(0.984);transform-origin:0 0;">Regression</div>
<div class="t" style="left:898.4px;top:823.5px;font-size:13px;color:#222;font-weight:700;transform:scaleX(1.122);transform-origin:0 0;">...</div>
<div class="t" style="left:7.1px;top:848.8px;font-size:12px;color:#444;transform:scaleX(0.904);transform-origin:0 0;">Ready</div>
<div class="t" style="left:1564.6px;top:848.8px;font-size:12px;color:#444;transform:scaleX(0.874);transform-origin:0 0;">100%</div>
<div class="t" style="left:720.7px;top:888.6px;font-size:17px;color:#333;transform:scaleX(1.207);transform-origin:0 0;">www.deyako.com</div>
</body></html>
